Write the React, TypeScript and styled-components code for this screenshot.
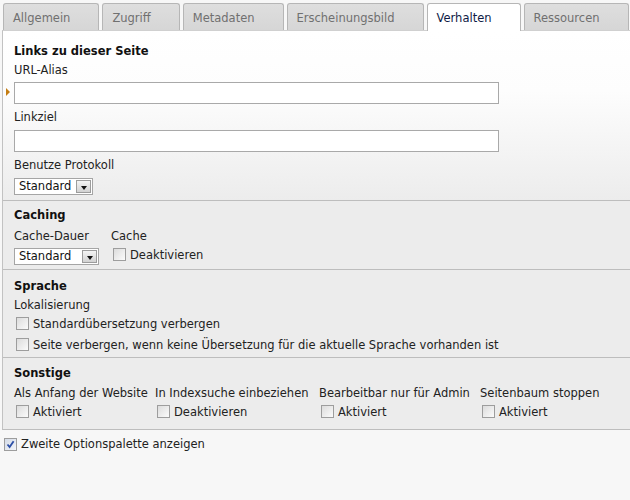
import React from "react";
import styled, { createGlobalStyle } from "styled-components";

const GlobalStyle = createGlobalStyle`
  body {
    margin: 0;
    background: #f7f7f7;
    font-family: "DejaVu Sans", Verdana, sans-serif;
    font-size: 11.5px;
    color: #222;
  }
`;

const Page = styled.div`
  width: 630px;
`;

const TabBar = styled.div`
  display: flex;
  gap: 3px;
  padding: 3px 0 0 3px;
  height: 27px;
`;

const Tab = styled.div<{ $active?: boolean }>`
  line-height: 28px;
  padding: 0 28px 0 9px;
  border: 1px solid #b6b6b6;
  border-bottom: none;
  border-radius: 3px 3px 0 0;
  background: ${(p) => (p.$active ? "#fff" : "linear-gradient(#dedede, #d6d6d6)")};
  color: ${(p) => (p.$active ? "#0e1a45" : "#707070")};
  white-space: nowrap;
  position: relative;
  z-index: ${(p) => (p.$active ? 1 : 0)};
  margin-bottom: ${(p) => (p.$active ? "-1px" : "0")};
  height: ${(p) => (p.$active ? "27px" : "26px")};
`;

const Panel = styled.div`
  margin-left: 2px;
  border-left: 1px solid #c2c2c2;
  border-top: 1px solid #d0d0d0;
  border-bottom: 1px solid #bdbdbd;
  background: linear-gradient(to bottom, #ffffff 0, #fdfdfd 60px, #ececec 170px, #ececec 100%);
`;

const Section = styled.div<{ $pt: number; $pb: number }>`
  padding: ${(p) => p.$pt}px 11px ${(p) => p.$pb}px;
  & + & {
    border-top: 1px solid #bdbdbd;
  }
`;

const Title = styled.div`
  font-weight: bold;
  color: #111;
  line-height: 16px;
`;

const Label = styled.div<{ $mt?: number }>`
  line-height: 16px;
  margin-top: ${(p) => p.$mt ?? 6}px;
  white-space: nowrap;
`;

const Control = styled.div<{ $mt?: number }>`
  margin-top: ${(p) => p.$mt ?? 4}px;
  position: relative;
`;

const TextInput = styled.input`
  display: block;
  box-sizing: border-box;
  width: 485px;
  height: 22px;
  border: 1px solid #a9a9a9;
  background: #fff;
  margin: 0;
  padding: 0 4px;
  font: inherit;
`;

const Marker = styled.span`
  position: absolute;
  left: -8px;
  top: 6px;
  width: 0;
  height: 0;
  border-top: 4px solid transparent;
  border-bottom: 4px solid transparent;
  border-left: 4px solid #c47d12;
`;

const Select = styled.div<{ $w: number }>`
  box-sizing: border-box;
  width: ${(p) => p.$w}px;
  height: 17px;
  border: 1px solid #a5a5a5;
  background: #fff;
  display: flex;
  align-items: center;
  justify-content: space-between;
  padding: 0 1px 0 4px;
  line-height: 15px;
  color: #111;
`;

const SelectButton = styled.span`
  box-sizing: border-box;
  width: 15px;
  height: 13px;
  border: 1px solid #9c9c9c;
  background: linear-gradient(#f4f4f4, #d2d2d2);
  display: flex;
  align-items: center;
  justify-content: center;
  &::after {
    content: "";
    margin-top: 2px;
    border-left: 3px solid transparent;
    border-right: 3px solid transparent;
    border-top: 4px solid #111;
  }
`;

const Grid = styled.div<{ $cols: string; $mt?: number }>`
  display: grid;
  grid-template-columns: ${(p) => p.$cols};
  margin-top: ${(p) => p.$mt ?? 0}px;
  align-items: start;
`;

const CheckRow = styled.label<{ $h?: number; $indent?: number }>`
  display: flex;
  align-items: center;
  height: ${(p) => p.$h ?? 21}px;
  padding-left: ${(p) => p.$indent ?? 2}px;
  white-space: nowrap;
`;

const Box = styled.span<{ $checked?: boolean }>`
  box-sizing: border-box;
  width: 13px;
  height: 13px;
  margin-right: 4px;
  border: 1px solid #9d9d9d;
  background: ${(p) =>
    p.$checked ? "linear-gradient(135deg, #d4dbe6, #f3f5f9)" : "linear-gradient(135deg, #dcdcdc, #fbfbfb)"};
  display: inline-flex;
  align-items: center;
  justify-content: center;
  flex: none;
`;

const Footer = styled.div`
  padding: 6px 0 0 0;
`;

function Check({ label, checked, indent, h }: { label: string; checked?: boolean; indent?: number; h?: number }) {
  return (
    <CheckRow $indent={indent} $h={h}>
      <Box $checked={checked}>
        {checked && (
          <svg width="9" height="9" viewBox="0 0 9 9">
            <path d="M1.5 4.5 L3.6 7 L7.6 1.2" fill="none" stroke="#2c4fa6" strokeWidth="1.8" />
          </svg>
        )}
      </Box>
      {label}
    </CheckRow>
  );
}

const tabs = ["Allgemein", "Zugriff", "Metadaten", "Erscheinungsbild", "Verhalten", "Ressourcen"];

export default function App() {
  return (
    <Page>
      <GlobalStyle />
      <TabBar>
        {tabs.map((t) => (
          <Tab key={t} $active={t === "Verhalten"}>
            {t}
          </Tab>
        ))}
      </TabBar>
      <Panel>
        <Section $pt={12} $pb={5}>
          <Title>Links zu dieser Seite</Title>
          <Label $mt={3}>URL-Alias</Label>
          <Control $mt={4}>
            <Marker />
            <TextInput />
          </Control>
          <Label $mt={5}>Linkziel</Label>
          <Control $mt={5}>
            <TextInput />
          </Control>
          <Label $mt={5}>Benutze Protokoll</Label>
          <Control $mt={5}>
            <Select $w={79}>
              Standard
              <SelectButton />
            </Select>
          </Control>
        </Section>

        <Section $pt={6} $pb={4}>
          <Title>Caching</Title>
          <Grid $cols="97px auto" $mt={5}>
            <Label $mt={0}>Cache-Dauer</Label>
            <Label $mt={0}>Cache</Label>
          </Grid>
          <Grid $cols="97px auto" $mt={4}>
            <Select $w={85}>
              Standard
              <SelectButton />
            </Select>
            <Check label="Deaktivieren" h={13} />
          </Grid>
        </Section>

        <Section $pt={8} $pb={2}>
          <Title>Sprache</Title>
          <Label $mt={3}>Lokalisierung</Label>
          <Check label="Standardübersetzung verbergen" />
          <Check label="Seite verbergen, wenn keine Übersetzung für die aktuelle Sprache vorhanden ist" />
        </Section>

        <Section $pt={7} $pb={7}>
          <Title>Sonstige</Title>
          <Grid $cols="141px 164px 161px auto" $mt={4}>
            <Label $mt={0}>Als Anfang der Website</Label>
            <Label $mt={0}>In Indexsuche einbeziehen</Label>
            <Label $mt={0}>Bearbeitbar nur für Admin</Label>
            <Label $mt={0}>Seitenbaum stoppen</Label>
            <Check label="Aktiviert" />
            <Check label="Deaktivieren" />
            <Check label="Aktiviert" />
            <Check label="Aktiviert" />
          </Grid>
        </Section>
      </Panel>
      <Footer>
        <Check label="Zweite Optionspalette anzeigen" checked indent={4} h={16} />
      </Footer>
    </Page>
  );
}
